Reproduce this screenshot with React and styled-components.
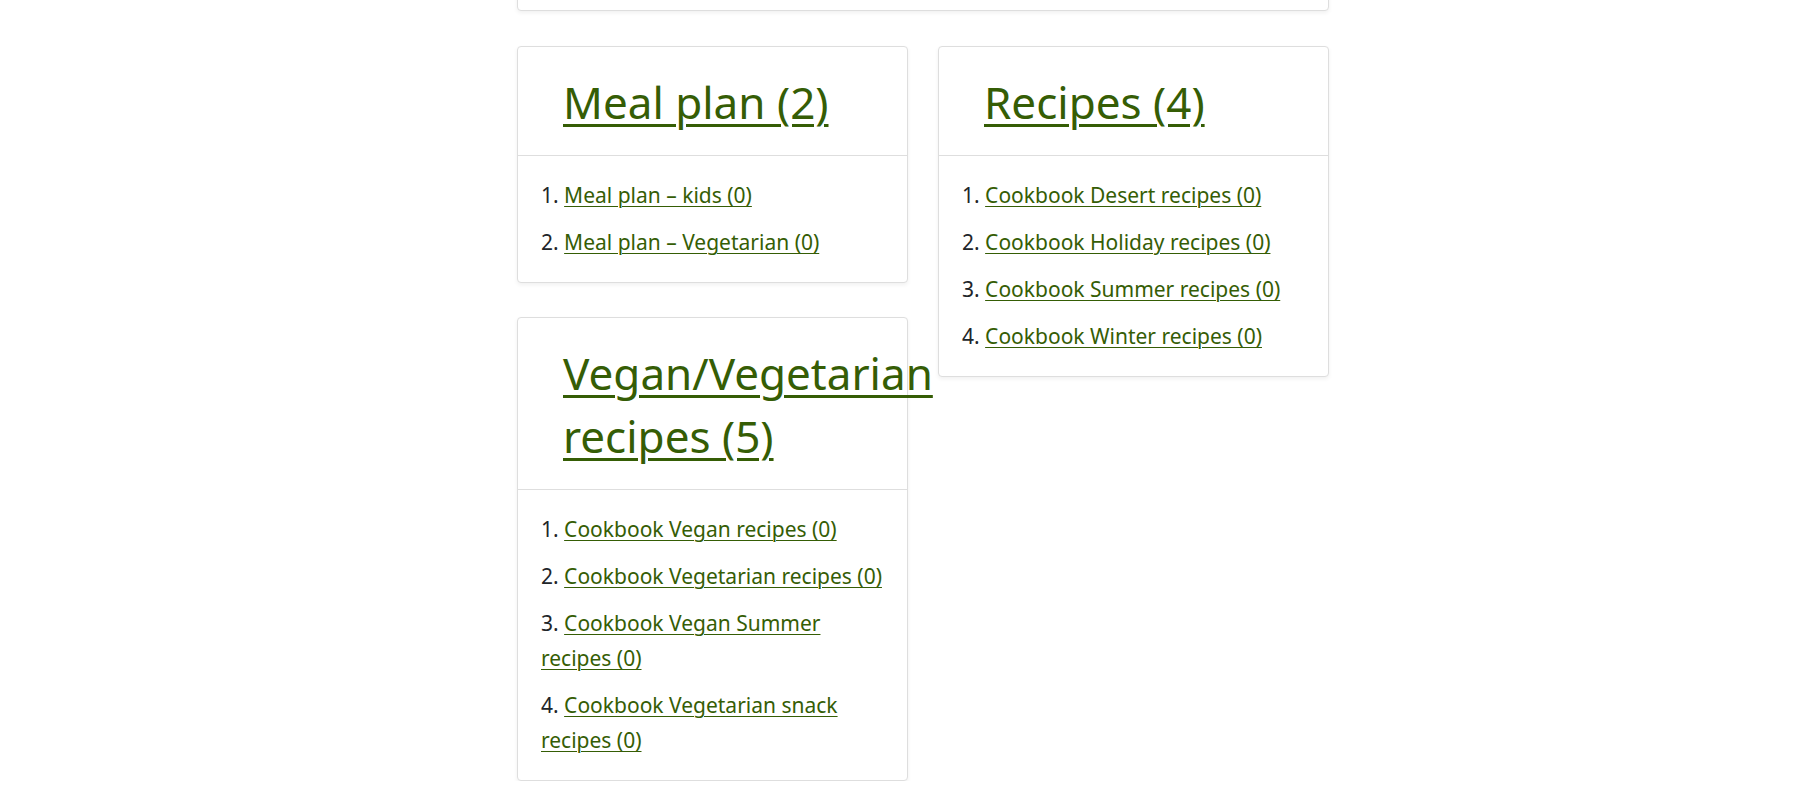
import React from "react";
import styled, { createGlobalStyle } from "styled-components";

const GlobalStyle = createGlobalStyle`
  html, body {
    margin: 0;
    padding: 0;
    background: #fff;
  }
  body {
    font-family: "Noto Sans", "Open Sans", sans-serif;
    color: #212529;
    overflow: hidden;
  }
`;

const Page = styled.div`
  padding-left: 517px;
  width: 812px;
  margin-top: -40px;
`;

const Card = styled.div`
  background: #fff;
  border: 1px solid #dedede;
  border-radius: 4px;
  box-shadow: 0 2px 4px rgba(0, 0, 0, 0.06);
  box-sizing: border-box;
`;

const TopCard = styled(Card)`
  height: 51px;
  margin-bottom: 35px;
`;

const Columns = styled.div`
  display: grid;
  grid-template-columns: 391px 391px;
  column-gap: 30px;
  align-items: start;
`;

const Column = styled.div`
  display: flex;
  flex-direction: column;
  gap: 34px;
`;

const Header = styled.div`
  padding: 24px 45px 21px;
  border-bottom: 1px solid #dedede;
`;

const Title = styled.h2`
  margin: 0;
  font-size: 44px;
  font-weight: 400;
  line-height: 63px;
`;

const GreenLink = styled.a`
  color: #355d05;
  text-decoration: underline;
  text-decoration-thickness: ${(p) => (p.$big ? "3px" : "1px")};
  text-underline-offset: ${(p) => (p.$big ? "5px" : "3px")};
`;

const List = styled.ol`
  margin: 0;
  padding: 22px 23px 10px;
  list-style: decimal inside;
`;

const Item = styled.li`
  font-size: 21px;
  line-height: 35px;
  margin-bottom: 12px;
`;

const cards = {
  meal: {
    title: "Meal plan (2)",
    items: ["Meal plan – kids (0)", "Meal plan – Vegetarian (0)"],
  },
  recipes: {
    title: "Recipes (4)",
    items: [
      "Cookbook Desert recipes (0)",
      "Cookbook Holiday recipes (0)",
      "Cookbook Summer recipes (0)",
      "Cookbook Winter recipes (0)",
    ],
  },
  vegan: {
    title: "Vegan/Vegetarian recipes (5)",
    items: [
      "Cookbook Vegan recipes (0)",
      "Cookbook Vegetarian recipes (0)",
      "Cookbook Vegan Summer recipes (0)",
      "Cookbook Vegetarian snack recipes (0)",
    ],
  },
};

const CategoryCard = ({ data }) => (
  <Card>
    <Header>
      <Title>
        <GreenLink href="#" $big>
          {data.title}
        </GreenLink>
      </Title>
    </Header>
    <List>
      {data.items.map((item) => (
        <Item key={item}>
          <GreenLink href="#">{item}</GreenLink>
        </Item>
      ))}
    </List>
  </Card>
);

const App = () => {
  return (
    <>
      <GlobalStyle />
      <Page>
        <TopCard />
        <Columns>
          <Column>
            <CategoryCard data={cards.meal} />
            <CategoryCard data={cards.vegan} />
          </Column>
          <Column>
            <CategoryCard data={cards.recipes} />
          </Column>
        </Columns>
      </Page>
    </>
  );
};

export default App;
